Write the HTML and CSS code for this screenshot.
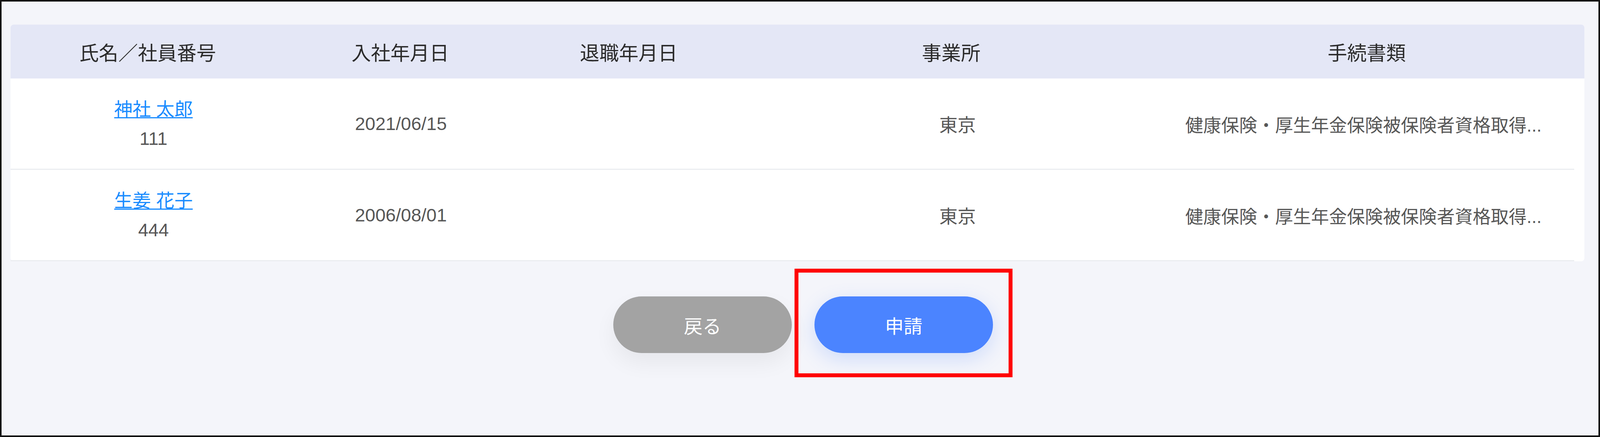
FILE: index.html
```html
<!DOCTYPE html>
<html lang="ja">
<head>
<meta charset="utf-8">
<title>手続書類</title>
<link rel="stylesheet" href="styles.css">
</head>
<body>
<div class="frame">
  <div class="table">
    <div class="thead">
      <div class="th">氏名／社員番号</div>
      <div class="th">入社年月日</div>
      <div class="th">退職年月日</div>
      <div class="th">事業所</div>
      <div class="th">手続書類</div>
      <div class="th"></div>
    </div>
    <div class="tbody">
      <div class="row">
        <div class="cell name-cell">
          <a class="name-link" href="#">神社 太郎</a>
          <div class="emp-no">111</div>
        </div>
        <div class="cell">2021/06/15</div>
        <div class="cell"></div>
        <div class="cell">東京</div>
        <div class="cell docs">健康保険・厚生年金保険被保険者資格取得...</div>
      </div>
      <div class="row">
        <div class="cell name-cell">
          <a class="name-link" href="#">生姜 花子</a>
          <div class="emp-no">444</div>
        </div>
        <div class="cell">2006/08/01</div>
        <div class="cell"></div>
        <div class="cell">東京</div>
        <div class="cell docs">健康保険・厚生年金保険被保険者資格取得...</div>
      </div>
    </div>
  </div>
  <div class="actions">
    <button class="btn btn-back" type="button">戻る</button>
    <div class="highlight">
      <button class="btn btn-submit" type="button">申請</button>
    </div>
  </div>
</div>
</body>
</html>
```
FILE: styles.css
```css
html, body {
  margin: 0;
  padding: 0;
}

body {
  font-family: "Liberation Sans", "Noto Sans CJK JP", sans-serif;
  background: #f4f5fa;
}

.frame {
  box-sizing: border-box;
  width: 100%;
  height: 1119px;
  border: 4px solid #141414;
  background: #f4f5fa;
  padding: 59px 0.89% 0 0.55%;
  overflow: hidden;
}

.table {
  background: #ffffff;
  border-radius: 8px;
}

.thead {
  display: grid;
  grid-template-columns: 750fr 630fr 618fr 1144fr 1126fr 31fr;
  height: 138px;
  align-items: center;
  background: #e4e7f6;
  border-radius: 8px 8px 0 0;
  font-size: 50px;
  color: #2b2b2b;
}

.th {
  text-align: center;
  white-space: nowrap;
}

.tbody {
  padding-right: 0.63%;
}

.row {
  display: grid;
  grid-template-columns: 782fr 570fr 703fr 1066fr 1152fr;
  height: 231px;
  align-items: center;
  border-bottom: 3px solid #ebedf1;
  font-size: 47px;
  color: #575757;
}

.cell {
  min-width: 0;
  text-align: center;
  white-space: nowrap;
}

.name-cell {
  line-height: 75px;
}

.name-link {
  color: #1a8cff;
  text-decoration: underline;
  text-decoration-thickness: 3px;
  text-underline-offset: 4px;
}

.emp-no {
  color: #575757;
}

.docs {
  font-size: 46px;
}

.actions {
  display: flex;
  justify-content: center;
  column-gap: 1.44%;
  margin-top: 90px;
  padding-left: 0.74%;
}

.btn-back,
.highlight {
  flex: 0 0 11.44%;
}

.btn {
  height: 145px;
  border: none;
  border-radius: 73px;
  font-family: "Liberation Sans", "Noto Sans CJK JP", sans-serif;
  font-size: 48px;
  color: #ffffff;
  padding: 0;
  cursor: pointer;
}

.btn-back {
  background: #a3a3a3;
  box-shadow: 0 25px 55px rgba(0, 0, 0, 0.06);
}

.btn-submit {
  width: 100%;
  background: #4b84ff;
  box-shadow: 0 15px 50px rgba(75, 132, 255, 0.22);
}

.highlight {
  position: relative;
  display: flex;
}

.highlight::after {
  content: "";
  position: absolute;
  top: -71px;
  bottom: -62px;
  left: -11%;
  right: -10.8%;
  border: 10px solid #ff0000;
  pointer-events: none;
}
```
